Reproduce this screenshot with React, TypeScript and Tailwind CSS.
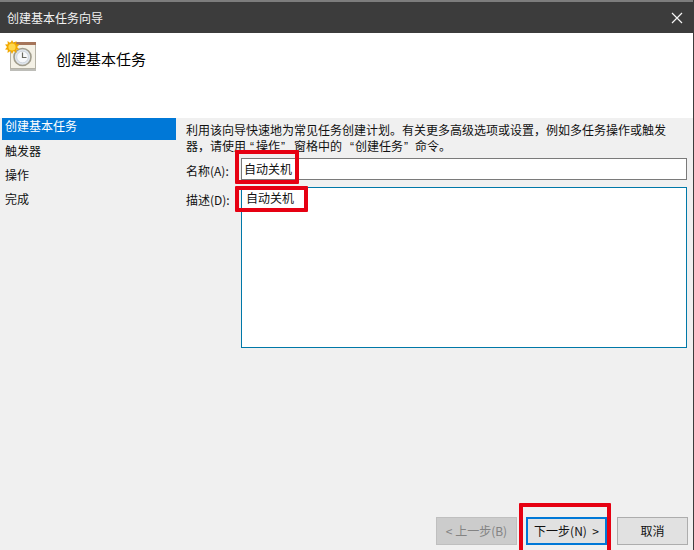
function OpenQuote() {
  return <span className="inline-block w-[10px] pr-[2px] text-right font-['Liberation_Sans']">“</span>;
}
function CloseQuote({ gap }: { gap: string }) {
  return <span className={gap === "14" ? "inline-block w-[14px] pl-[1px] text-left font-['Liberation_Sans']" : "inline-block w-[12px] pl-[1px] text-left font-['Liberation_Sans']"}>”</span>;
}

export default function App() {
  const font = { fontFamily: '"Noto Sans CJK SC", "Liberation Sans", sans-serif' };
  return (
    <div style={font} className="relative flex h-[550px] w-[694px] flex-col overflow-hidden border-r border-[#3c3c3c] bg-[#f0f0f0] text-[12px] leading-[16px] text-[#111]">
      <div className="h-[2px] bg-[#7d7d7d]" />
      <div className="flex h-[31px] items-center justify-between bg-[#3c3c3c] pl-[7px] pr-[10px] text-[#f2f2f2]">
        <span>创建基本任务向导</span>
        <svg width="12" height="12" viewBox="0 0 12 12" className="mt-[1px]">
          <path d="M1 1 L11 11 M11 1 L1 11" stroke="#f5f5f5" strokeWidth="1.2" fill="none" />
        </svg>
      </div>
      <div className="flex h-[85px] items-start bg-white">
        <svg width="32" height="34" viewBox="0 0 32 34" className="ml-[5px] mt-[6px] shrink-0">
          <rect x="5.5" y="3.5" width="25" height="26" fill="#f4f1e6" stroke="#b5b2a6" />
          <rect x="9" y="3" width="22" height="3" fill="#a5755a" />
          <path d="M5 30 h26 v2 h-26 z" fill="#bdbdb8" />
          <circle cx="17.5" cy="18" r="8.5" fill="#dfe5ec" stroke="#a09c8c" strokeWidth="1.6" />
          <circle cx="17.5" cy="18" r="5.8" fill="#f7f8fa" stroke="#bcc4cc" strokeWidth="0.6" />
          <path d="M17.5 13.5 V18.5 H21.5" stroke="#6a6a60" strokeWidth="1.2" fill="none" />
          <path d="M7 1 L8.6 4 L11.5 2 L11.2 5.2 L14.5 5.5 L12 8 L14.5 10.5 L11.2 10.8 L11.5 14 L8.6 12 L7 15 L5.4 12 L2.5 14 L2.8 10.8 L0 10.5 L2 8 L0 5.5 L2.8 5.2 L2.5 2 L5.4 4 Z" fill="#f2a900" />
          <circle cx="7" cy="8" r="3.6" fill="#ffd84d" />
        </svg>
        <h1 className="ml-[19px] mt-[15px] text-[15px] font-normal leading-[22px] text-black">创建基本任务</h1>
      </div>
      <div className="flex min-h-0 flex-1">
        <ul className="w-[176px] shrink-0 pl-[2px]">
          <li className="flex h-[22px] items-start bg-[#0078d7] pl-[3px] text-white">创建基本任务</li>
          <li className="-mt-[1px] flex h-[24px] items-center pl-[3px]">触发器</li>
          <li className="flex h-[24px] items-center pl-[3px]">操作</li>
          <li className="flex h-[24px] items-center pl-[3px]">完成</li>
        </ul>
        <div className="flex min-w-0 flex-1 flex-col pl-[10px] pr-[6px]">
          <p className="mt-[4px] h-[32px] whitespace-nowrap">
            利用该向导快速地为常见任务创建计划。有关更多高级选项或设置，例如多任务操作或触发
            <br />
            器，请使用<OpenQuote />操作<CloseQuote gap="14" />窗格中的<span className="inline-block w-[13px] pr-[1px] text-right font-['Liberation_Sans']">“</span>创建任务<CloseQuote gap="12" />命令。
          </p>
          <div className="mt-[4px] flex items-center">
            <span className="w-[55px] shrink-0 pt-[3px]">名称(A):</span>
            <div className="flex h-[22px] flex-1 items-center border border-[#7a7a7a] bg-white pl-[2px]">自动关机</div>
          </div>
          <div className="mt-[7px] flex items-start">
            <span className="w-[55px] shrink-0 pt-[5px]">描述(D):</span>
            <div className="h-[161px] flex-1 border border-[#0078a8] bg-white pl-[4px] pt-[2px]">自动关机</div>
          </div>
          <div className="mt-[169px] flex items-start">
            <button className="ml-[250px] h-[28px] w-[81px] shrink-0 border border-[#bfbfbf] bg-[#cccccc] text-[#838383]">&lt;&nbsp;上一步(B)</button>
            <button className="ml-[9px] h-[28px] w-[81px] shrink-0 border-2 border-[#0078d7] bg-[#e1e1e1] text-[#111]">下一步(N)&nbsp;&nbsp;&gt;</button>
            <button className="ml-[10px] h-[28px] w-[71px] shrink-0 border border-[#adadad] bg-[#e1e1e1] text-[#111]">取消</button>
          </div>
        </div>
      </div>
      <div className="pointer-events-none absolute left-[235px] top-[150px] h-[34px] w-[64px] rounded-[1px] border-4 border-[#e60012]" />
      <div className="pointer-events-none absolute left-[235px] top-[186px] h-[26px] w-[73px] rounded-[1px] border-4 border-[#e60012]" />
      <div className="pointer-events-none absolute left-[519px] top-[503px] h-[60px] w-[92px] rounded-[1px] border-4 border-[#e60012]" />
    </div>
  );
}
